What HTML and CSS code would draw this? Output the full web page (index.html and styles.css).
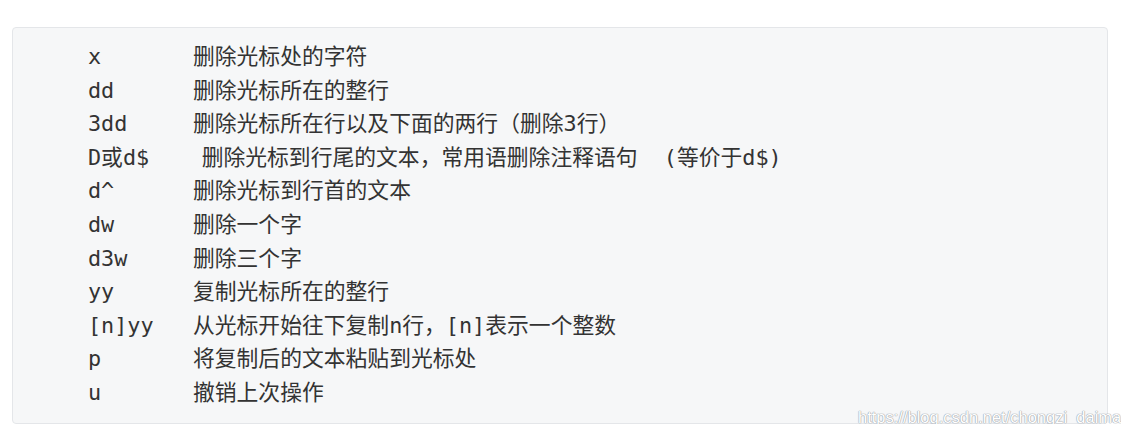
FILE: index.html
```html
<!DOCTYPE html>
<html lang="zh-CN">
<head>
<meta charset="utf-8">
<title>vim</title>
<link rel="stylesheet" href="styles.css">
</head>
<body>
<div class="page">
<pre class="code"><code>x       删除光标处的字符
dd      删除光标所在的整行
3dd     删除光标所在行以及下面的两行（删除3行）
D或d$    删除光标到行尾的文本，常用语删除注释语句  (等价于d$)
d^      删除光标到行首的文本
dw      删除一个字
d3w     删除三个字
yy      复制光标所在的整行
[n]yy   从光标开始往下复制n行，[n]表示一个整数
p       将复制后的文本粘贴到光标处
u       撤销上次操作</code></pre>
<span class="watermark">https://blog.csdn.net/chongzi_daima</span>
</div>
</body>
</html>
```

FILE: styles.css
```css
html, body {
  margin: 0;
  padding: 0;
  background: #ffffff;
}
.page {
  position: relative;
  padding: 27px 13px 0 12px;
}
.code {
  margin: 0;
  height: 397px;
  box-sizing: border-box;
  padding: 12px 0 0 75px;
  background: #f6f7f8;
  border: 1px solid #e4e6e9;
  border-radius: 4px;
  font-family: "DejaVu Sans Mono", "Noto Sans CJK SC", monospace;
  font-size: 21.8px;
  line-height: 33.6px;
  color: #333333;
  white-space: pre;
}
.code code {
  font-family: inherit;
}
.watermark {
  position: absolute;
  left: 858px;
  top: 408px;
  font-family: "Liberation Sans", Arial, sans-serif;
  font-size: 16.5px;
  line-height: 18px;
  color: #ffffff;
  text-shadow: 0 0 1px #9fa4ab, 0 0 1px #9fa4ab, 0 0 1px #9fa4ab;
}
```
